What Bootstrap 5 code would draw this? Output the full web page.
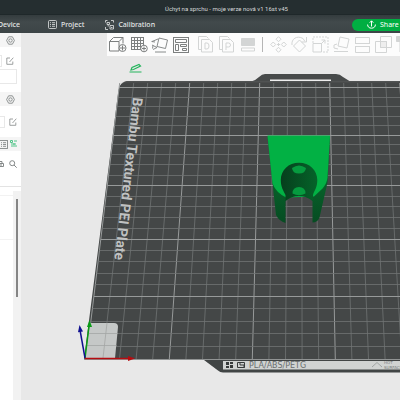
<!DOCTYPE html>
<html lang="en">
<head>
<meta charset="utf-8">
<meta name="viewport" content="width=device-width, initial-scale=1">
<title>Úchyt na sprchu</title>
<link href="https://cdn.jsdelivr.net/npm/bootstrap@5.3.0/dist/css/bootstrap.min.css" rel="stylesheet">
<style>
body{font-family:"Noto Sans","Open Sans",sans-serif;font-size:7px;line-height:10px;background:#e8e8e8}
svg{display:block;fill:none;stroke:currentColor;flex-shrink:0}
button{border:0;background:none;padding:0;color:inherit}
.titlebar{height:15px;background:#252e30;color:#d5d8d8;border-bottom:1px solid #1f282a}
.titlebar h1{font:400 6px/14px Roboto,sans-serif;margin:0 0 0 53px;padding-top:2px}
.tabs{height:18px;padding-top:1px;background:linear-gradient(#343c3e,#424a4c 40%,#3c4446);color:#e3e6e6}
.tabs a{color:inherit;text-decoration:none;font-weight:500}
.tab-device{width:20px;overflow:hidden}
.tab-project{margin-left:28px}
.tab-calib{margin-left:21px}
.share{height:12px;width:48px;background:#00ae42;color:#fff;padding-left:15px;border-radius:6px 0 0 6px}
.side{width:21px;background:#fff;color:#858989}
.side-head{height:14px;background:#f5f5f5;padding-right:6px}
.side-line{padding-right:7px}
.side input{height:12px;border:1px solid #e8e8e8;border-left:0;min-width:0;padding:0;background:#fff}
.side .bed{height:15px;margin-top:2px}
.side-gap{margin-top:10px}
.side-row{margin-top:9px}
.side-list{border-top:1px solid #e3e3e3;margin-top:18px}
.side-group{border-top:1px solid #f2f2f2;height:44px}
.scrollrail{width:8px;background:#f2f2f2;padding:8px 3px 0 3px}
.scrollthumb{width:2px;height:98px;background:#858585}
.filament-tree{color:#52c58a;margin-left:2px}
.tools{height:23px;background:#fcfcfc;margin-left:86px;color:#7c7f7f;overflow:hidden}
.tools button{flex:0 0 21px}
.tools button:disabled{color:#d3d5d5}
.tools svg{margin:auto}
.divider{width:1px;height:15px;background:#b5b5b5;margin:0 5px 0 4px;flex:none}
.plate-name{font:700 14px Roboto,sans-serif;fill:#c0c2c2}
.plate-kind{font:8px "DejaVu Sans",sans-serif;fill:#6a6e6e}
.plate-hot{font:4px "DejaVu Sans",sans-serif;fill:#777c7c}
.scene{min-height:0}
</style>
<script src="https://cdn.jsdelivr.net/npm/bootstrap@5.3.0/dist/js/bootstrap.bundle.min.js"></script>
</head>
<body class="vh-100 d-flex flex-column overflow-hidden">
<header>
  <div class="titlebar d-flex justify-content-center"><h1>Úchyt na sprchu - moje verze nová v1 16st v45</h1></div>
  <nav class="tabs d-flex align-items-center">
    <a href="#" class="tab-device d-flex justify-content-end"><span>Device</span></a>
    <a href="#" class="tab-project d-flex align-items-center gap-1">
      <svg width="9" height="9" viewBox="0 0 9 9" stroke-width=".8"><rect x=".5" y=".5" width="8" height="8" rx="1"/><path d="M2 2.7h1M4 2.7h3M2 4.5h1M4 4.5h3M2 6.3h1M4 6.3h3"/></svg>Project</a>
    <a href="#" class="tab-calib d-flex align-items-center gap-1">
      <svg width="9" height="10" viewBox="0 0 9 10" stroke-width=".8"><path d="M.5 2.500v-2h2M6 .5h2.500v2M.5 7v2.500H3M2 2.500h2.500v2H2zM3.200 4.500v2M5 5.500h3.500v3.500H5zM6 7.500h1.500"/></svg>Calibration</a>
    <button class="share ms-auto d-flex align-items-center gap-1">
      <svg width="9" height="9" viewBox="0 0 9 9" stroke-width="1"><path d="M4.500 6.500V1M2.700 2.700 4.500.8l1.800 1.900M.6 4.500c0 2.300 1.500 3.700 3.900 3.700s3.900-1.400 3.900-3.700"/></svg>Share</button>
  </nav>
</header>
<div class="d-flex flex-grow-1 scene">
  <aside class="side d-flex flex-column flex-shrink-0 overflow-hidden">
    <div class="side-head d-flex align-items-center justify-content-end">
      <button aria-label="Printer settings"><svg width="9" height="9" viewBox="0 0 9 9" stroke-width=".9"><path d="M2.600.8h3.800l2 3.700-2 3.700H2.600L.6 4.500z"/><circle cx="4.500" cy="4.500" r="1.700"/></svg></button>
    </div>
    <div class="side-line d-flex align-items-center mt-2">
      <input class="flex-grow-1 w-100" aria-label="Printer">
      <button class="ms-1" aria-label="Edit printer"><svg width="8" height="8" viewBox="0 0 8 8" stroke-width=".8"><path d="M4 1H.8v6.300h6V4.500M3.500 5 7.300.7"/></svg></button>
    </div>
    <div class="pe-1 d-flex"><input class="bed w-100" aria-label="Bed type"></div>
    <div class="side-head d-flex align-items-center justify-content-end mt-2">
      <button aria-label="Filament settings"><svg width="9" height="9" viewBox="0 0 9 9" stroke-width=".9"><path d="M2.600.8h3.800l2 3.700-2 3.700H2.600L.6 4.500z"/><circle cx="4.500" cy="4.500" r="1.700"/></svg></button>
    </div>
    <div class="side-gap d-flex align-items-center pe-1">
      <input class="w-100" aria-label="Filament">
      <button class="ms-1" aria-label="Edit filament"><svg width="8" height="8" viewBox="0 0 8 8" stroke-width=".8"><path d="M4 1H.8v6.300h6V4.500M3.500 5 7.300.7"/></svg></button>
    </div>
    <div class="side-head side-row d-flex align-items-center justify-content-end pe-1">
      <svg width="9" height="9" viewBox="0 0 9 9" stroke-width=".9"><rect x=".5" y=".5" width="8" height="8"/><path d="M2 2.700h1M4 2.700h3M2 4.500h1M4 4.500h3M2 6.300h1M4 6.300h3"/></svg>
      <svg class="filament-tree" width="7" height="8" viewBox="0 0 7 8"><path d="M.5.500h2v2h-2zM4 1h3M1 4h5M4 3v4M5 6h2M2 5v2"/></svg>
    </div>
    <div class="side-row d-flex justify-content-end pe-1">
      <svg width="8" height="8" viewBox="0 0 8 8" class="me-1"><path d="M0 3.500h6.500v3H0M1 3V1.500h4V3M1 5h4"/></svg>
      <svg width="8" height="8" viewBox="0 0 8 8"><circle cx="3.200" cy="3.200" r="2.500"/><path d="m5 5 2.700 2.700"/></svg>
    </div>
    <div class="side-list d-flex flex-grow-1 pt-1">
      <div class="flex-grow-1"><div class="side-group mt-1"></div><div class="side-group"></div></div>
      <div class="scrollrail"><div class="scrollthumb"></div></div>
    </div>
  </aside>
  <main class="flex-grow-1 d-flex flex-column overflow-hidden">
    <div class="tools d-flex align-items-center flex-shrink-0">
      <button aria-label="Add"><svg width="19" height="17" viewBox="0 0 19 17"><path d="M1.500 5.500h9.500v9.500H1.500zM1.500 5.500l4-4H15L11 5.500M15 1.500v6"/><circle cx="14.500" cy="12" r="3.500" fill="#fcfcfc"/><path d="M14.500 9.500v5M12 12h5"/></svg></button>
      <button aria-label="Add plate"><svg width="18" height="17" viewBox="0 0 18 17"><path d="M1.500 1v12.500M4.500 1v12.500M7.500 1v12.500M10.500 1v12.500M13.500 1v9M1 1.500h13M1 4.500h13M1 7.500h13M1 10.500h11M1 13.500h10"/><circle cx="14" cy="12.500" r="3.300" fill="#fcfcfc"/><path d="M14 10.500v4M12 12.500h4"/></svg></button>
      <button aria-label="Auto orient"><svg width="18" height="16" viewBox="0 0 18 16" stroke-width=".9"><path d="m8 1 8.500 2-2 8.500L6 9.500zM4 15h11M7 2 1 4.500M4 5l-3.500-.5M1 8l5 2.500-4 2M2 8.500l-.5 3"/></svg></button>
      <button aria-label="Arrange"><svg width="16" height="16" viewBox="0 0 16 16"><rect x=".5" y=".5" width="15" height="15"/><path d="M2.500 2.500h11v3h-11zM2.500 7.500h3v6h-3zM7.500 7.500h6v2h-6zM9.500 11.500h4v2h-4z"/></svg></button>
      <button disabled class="ms-1" aria-label="Split to objects"><svg width="16" height="17" viewBox="0 0 16 17"><path d="M3.500 13.500h-3v-13h8l2 2M3.500 3.500h8l3 3v9.500h-11zM7 7v6h2q2 0 2-3t-2-3z"/></svg></button>
      <button disabled aria-label="Split to parts"><svg width="16" height="17" viewBox="0 0 16 17"><path d="M3.500 13.500h-3v-13h8l2 2M3.500 3.500h8l3 3v9.500h-11zM7 14V7h2.500q2 0 2 2t-2 2H7"/></svg></button>
      <button disabled aria-label="Layer height"><svg width="14" height="14" viewBox="0 0 14 14"><path fill="currentColor" d="M.5.500h13v7H.5z"/><path d="M.5 10h13v3H.5z"/></svg></button>
      <span class="divider"></span>
      <button disabled aria-label="Move"><svg width="17" height="17" viewBox="0 0 17 17"><path d="m8.500.7 2.500 2.500-2.500 2.500L6 3.200zM8.500 11.300l2.500 2.500-2.500 2.500L6 13.800zM.7 8.500 3.200 6l2.500 2.500L3.200 11zM11.300 8.500 13.800 6l2.500 2.500-2.500 2.500zM7 8.500h3M8.500 7v3"/></svg></button>
      <button disabled aria-label="Rotate"><svg width="17" height="17" viewBox="0 0 17 17"><path d="m8.500 4 6 6-6 6-6-6zM1 9C0 3 6-1 12 2.500l2 3M15.500 1v5h-5"/></svg></button>
      <button disabled aria-label="Scale"><svg width="17" height="17" viewBox="0 0 17 17"><path d="M1 7.500h8.500V16H1z"/><path stroke-dasharray="2 1" d="M1 7V1h15v15h-6"/><path d="m9 8 4-4M9.500 4H13v3.500"/></svg></button>
      <button disabled aria-label="Lay on face"><svg width="17" height="17" viewBox="0 0 17 17"><path d="m7 1 9 2-2 9-9-2zM1 15.500h14M1 9v3l4 1M1 9l3-1"/></svg></button>
      <button disabled aria-label="Cut"><svg width="15" height="16" viewBox="0 0 15 16"><path d="M.5 6V.5h14V6M.5 10v5.500h14V10M0 6.500h15M0 9.500h15"/></svg></button>
      <button disabled aria-label="Boolean"><svg width="17" height="17" viewBox="0 0 17 17"><path fill="#eee" d="M5.500 5.500h6v6h-6z"/><path d="M5.500.500h11v11h-11zM.5 5.500h11v11H.5z"/></svg></button>
      <button disabled aria-label="Paint supports"><svg width="17" height="17" viewBox="0 0 17 17"><path fill="currentColor" d="M.5.500h16v5H.5z"/><path d="M4 6v10h9V6"/></svg></button>
    </div>
    <svg class="flex-grow-1 flex-shrink-1 scene w-100" viewBox="21 56 379 344" preserveAspectRatio="xMinYMin slice" role="img" aria-label="Build plate with model">
      <defs>
        <linearGradient id="legs" x2="0" y2="1"><stop stop-color="#087a34"/><stop offset="1" stop-color="#064c22"/></linearGradient>
        <linearGradient id="bore"><stop stop-color="#063f1d"/><stop offset="1" stop-color="#056329"/></linearGradient>
      </defs>
      <g stroke="none">
        <path fill="#484b4b" d="M250 82q5-1 9-5 3-3 6-3h71q4 0 7 3l8 5z"/>
        <path fill="#eee" d="M270 79.500h61v2h-61z"/>
        <path fill="#444747" d="M84 359.500 118.500 90Q119.500 82 128 81H400v278.500z"/>
        <path fill="#505353" d="M127 81H400v1.500H122z"/>
      </g>
      <g id="grid" stroke="#707373" stroke-width=".8"></g>
      <path stroke="#919494" d="M84 359.500h316"/>
      <g stroke="none">
        <path fill="#414545" d="M204 360h196v12.500H223q-3 0-5-2z"/>
        <path fill="#d0d3d2" d="M223 361h177v8.500H223z"/>
        <path fill="#363a3a" d="M226 362h3v3h-3zm4 0h3v2h-3zm-4 4h3v2h-3zm4-1h3v3h-3z"/>
        <path fill="#d0d3d2" stroke="#363a3a" d="M237.500 362.500h7v5h-7zM240 365h4v3M239 364h2"/>
        <text class="plate-kind" x="249" y="368">PLA/ABS/PETG</text>
        <path fill="none" stroke="#939898" stroke-width=".8" d="m372 367 5-4.500 5 4.500"/>
        <text class="plate-hot" x="384" y="364">HOT</text>
        <text class="plate-hot" x="384" y="369">SURFACE</text>
        <text class="plate-name" transform="translate(133 97) rotate(96.500)">Bambu Textured PEI Plate</text>
        <path fill="#c5c8c7" d="M85 358.500 90 323h24q4 0 4 4l-3 31.500z"/>
      </g>
      <path stroke="#a3a6a5" stroke-width=".8" d="M87.500 333.500h30M86.500 345.500h30M107 323l-4 35"/>
      <path stroke="#0a9c16" stroke-width="1.500" d="m85 358 4-32"/><path fill="#0a9c16" stroke="none" d="m89.500 320 2.500 7h-5z"/>
      <path stroke="#101090" stroke-width="1.500" d="m85 358-5-28"/><path fill="#101090" stroke="none" d="m79.500 325 3.500 6.500-5 .8z"/>
      <path stroke="#b50c10" stroke-width="1.500" d="M85 358.500h44"/><path fill="#b50c10" stroke="none" d="m128 356 7 2.500-7 2.500z"/>
      <g stroke="none">
        <path fill="url(#legs)" d="M267.500 137 276 215q3 6 9.500 8V201q6-5 13.500-5t13.500 5v21.500q5 0 7-5l8-35 2.500-46z"/>
        <path fill="#02b144" d="M267.500 135.500H330l-2.500 42q-.5 6-5 11L314 196.500l-28 1q-10-5-13.500-14z"/>
        <path fill="url(#bore)" d="M299 162.700c10.500 0 18.300 7.300 18.300 17.300 0 8-3 10-4.300 15v6q-6-5-14-5t-13.500 5v-6c-2-4-4.700-8-4.700-15 0-10 7.700-17.300 18.200-17.300z"/>
        <path fill="#069b3f" d="M292 168q7-5 14 0-.5 5.500-7 5.500t-7-5.500zM292.500 193.500q0-6.500 6.500-6.500t6.500 6.500q-6.500 3.500-13 0z"/>
      </g>
      <g stroke="#24b45c"><path stroke-width="1.200" d="M129.500 72h12M131 70l1-2.500 7-3 1.500 1.500-7 3.500z"/></g>
    </svg>
  </main>
</div>
<script>
/* Perspective grid, every fifth line brighter */
const grid = document.getElementById('grid');
const add = (d, major) => {
  const p = document.createElementNS('http://www.w3.org/2000/svg', 'path');
  p.setAttribute('d', d);
  if (major) { p.setAttribute('stroke', '#979a9a'); p.setAttribute('stroke-width', '1'); }
  grid.append(p);
};
for (let i = 0; i <= 24; i++) add(`M${119.7 + 14 * i} 83L${86.3 + 16.6 * i} 359`, i % 5 === 0);
[87, 97, 106, 116, 125, 135, 144, 154, 164, 175, 185, 196, 206, 217, 228, 239, 250, 261, 273, 284, 296, 308, 321, 333, 346].forEach((y, i) => {
  const left = 119.7 - 33.4 * (y - 83) / 276;
  add(`M${left} ${y + .5}H400`, i % 5 === 0);
});
</script>
</body>
</html>
